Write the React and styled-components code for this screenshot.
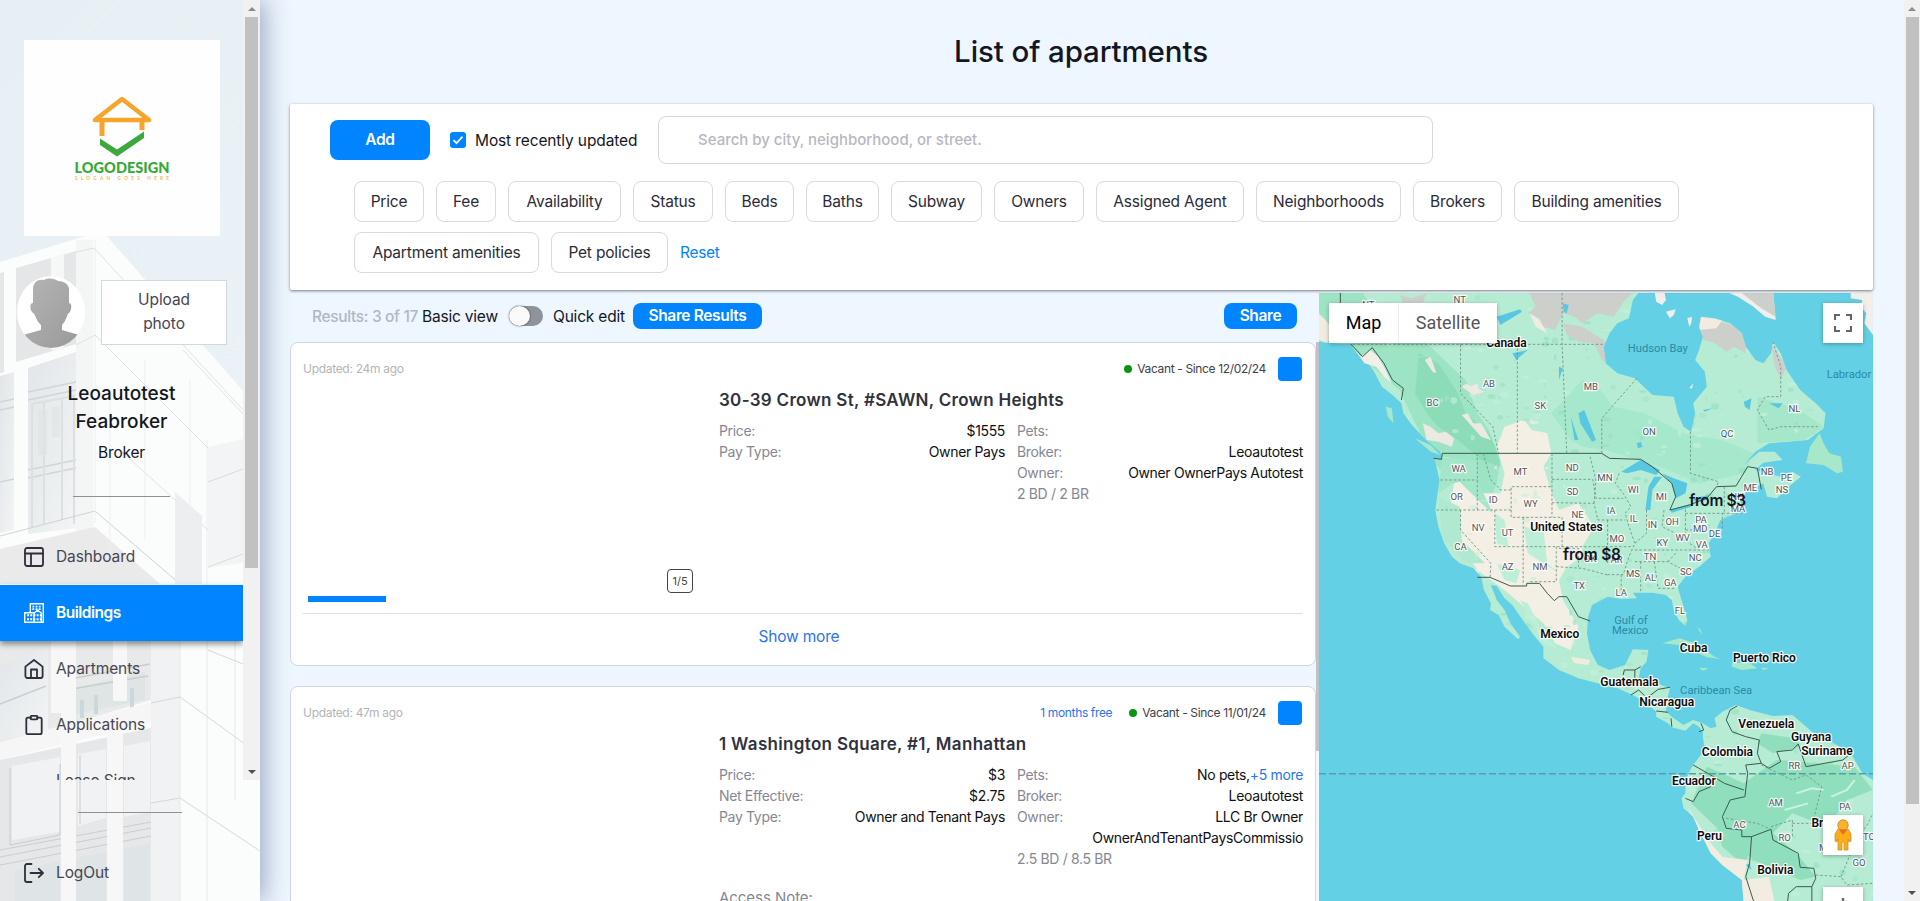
import React from "react";
import styled, { createGlobalStyle } from "styled-components";

const Global = createGlobalStyle`
  *, *::before, *::after { box-sizing: border-box; }
  html, body { margin: 0; height: 901px; overflow: hidden; }
  body { font-family: Inter, "Liberation Sans", sans-serif; font-size: 16px; color: #14171f; background: #eef6ff; }
  button { font: inherit; }
`;

const Page = styled.div`
  display: flex;
  width: 1920px;
  height: 901px;
  overflow: hidden;
  background: #eef6ff;
`;

/* ---------- sidebar ---------- */
const Sidebar = styled.aside`
  position: relative;
  z-index: 2;
  flex: none;
  width: 260px;
  height: 901px;
  background: #e9f0f4;
  box-shadow: 4px 0 24px rgba(50, 70, 110, 0.45);
`;
const Backdrop = styled.svg`
  position: absolute;
  inset: 0;
`;
const SidebarScroll = styled.div`
  position: relative;
  display: flex;
  height: 780px;
  overflow: hidden;
`;
const SidebarBody = styled.div`
  flex: none;
  width: 243px;
  display: flex;
  flex-direction: column;
  padding-top: 40px;
`;
const Brand = styled.div`
  width: 196px;
  height: 196px;
  margin-left: 24px;
  background: #fefefe;
`;
const Profile = styled.div`
  display: flex;
  align-items: center;
  gap: 16px;
  height: 72px;
  margin: 40px 0 0 17px;
`;
const UploadButton = styled.button`
  width: 126px;
  height: 65px;
  padding: 0 34px 1px;
  border: 1px solid #d3d8de;
  background: #fff;
  color: #464653;
  font-size: 15.5px;
  letter-spacing: -0.1px;
  line-height: 24px;
`;
const UserName = styled.div`
  margin: 32px auto 0;
  width: 130px;
  text-align: center;
  font-size: 19px;
  font-weight: 500;
  letter-spacing: 0.05px;
  line-height: 28px;
`;
const UserRole = styled.div`
  margin-top: 5px;
  text-align: center;
  font-size: 15.5px;
  letter-spacing: -0.2px;
  line-height: 24px;
`;
const Rule = styled.div`
  width: ${(p) => p.$w}px;
  height: 1px;
  margin: ${(p) => p.$margin};
  background: #8d9197;
  flex: none;
`;
const NavItem = styled.div`
  flex: none;
  display: flex;
  align-items: center;
  gap: 12px;
  height: 56px;
  padding-left: 24px;
  font-size: 15.5px;
  line-height: 22px;
  letter-spacing: ${(p) => (p.$active ? "-0.5px" : "-0.1px")};
  font-weight: ${(p) => (p.$active ? 600 : 400)};
  color: ${(p) => (p.$active ? "#fff" : "#464653")};
  background: ${(p) => (p.$active ? "#0084ff" : "transparent")};
  box-shadow: ${(p) => (p.$active ? "0 3px 6px rgba(0,0,0,.45)" : "none")};
  svg { color: ${(p) => (p.$active ? "#fff" : "#2f2f3c")}; }
`;
const NavText = styled.span`
  padding-bottom: 1px;
`;
const SidebarFooter = styled.div`
  position: relative;
  display: flex;
  flex-direction: column;
`;

/* ---------- scrollbars ---------- */
const Track = styled.div`
  flex: none;
  display: flex;
  flex-direction: column;
  align-items: center;
  justify-content: space-between;
  width: ${(p) => p.$w}px;
  height: ${(p) => p.$h}px;
  background: #f1f1f1;
`;
const Thumb = styled.div`
  width: 13px;
  height: ${(p) => p.$h}px;
  background: #c1c1c1;
`;
const TrackTop = styled.div`
  display: flex;
  flex-direction: column;
  align-items: center;
`;
const ArrowBox = styled.div`
  display: flex;
  align-items: center;
  justify-content: center;
  width: 17px;
  height: 17px;
`;
const Arrow = styled.i`
  border: 4px solid transparent;
  border-top-width: ${(p) => (p.$up ? 0 : 4)}px;
  border-bottom-width: ${(p) => (p.$up ? 4 : 0)}px;
  border-${(p) => (p.$up ? "bottom" : "top")}-color: ${(p) => (p.$up ? "#8b8b8b" : "#505050")};
`;
function Scrollbar({ width, height, thumb }) {
  return (
    <Track $w={width} $h={height}>
      <TrackTop>
        <ArrowBox><Arrow $up /></ArrowBox>
        <Thumb $h={thumb} />
      </TrackTop>
      <ArrowBox><Arrow /></ArrowBox>
    </Track>
  );
}

/* ---------- main ---------- */
const Main = styled.main`
  flex: none;
  width: 1644px;
  padding: 0 31px 0 29px;
  display: flex;
  flex-direction: column;
`;
const Title = styled.h1`
  margin: 0;
  height: 104px;
  line-height: 102px;
  text-align: center;
  font-size: 29.5px;
  font-weight: 500;
  letter-spacing: -0.1px;
`;
const FilterPanel = styled.section`
  flex: none;
  position: relative;
  z-index: 1;
  height: 186px;
  margin-left: 1px;
  padding-top: 12px;
  background: #fff;
  border-radius: 2px;
  box-shadow: 0 1px 3px rgba(0, 0, 0, 0.5);
  display: flex;
  flex-direction: column;
  gap: 17px;
`;
const SearchRow = styled.div`
  display: flex;
  align-items: center;
  height: 48px;
  padding-left: 40px;
`;
const BlueButton = styled.button`
  flex: none;
  width: ${(p) => p.$w}px;
  height: ${(p) => p.$h}px;
  padding: 0 0 1px;
  border: 0;
  border-radius: ${(p) => p.$r || 8}px;
  background: #0084ff;
  color: #fff;
  font-size: 15.5px;
  font-weight: 600;
  letter-spacing: -0.35px;
`;
const CheckLabel = styled.label`
  display: flex;
  align-items: center;
  gap: 9px;
  width: 208px;
  margin-left: 20px;
  white-space: nowrap;
  font-size: 15.5px;
  letter-spacing: -0.12px;
`;
const SearchField = styled.div`
  width: 775px;
  height: 48px;
  padding-left: 39px;
  border: 1px solid #d6d7dd;
  border-radius: 8px;
  line-height: 46px;
  color: #b7b7c4;
  font-size: 15px;
  font-weight: 500;
  letter-spacing: -0.01px;
`;
const Chips = styled.div`
  display: flex;
  flex-wrap: wrap;
  align-items: center;
  gap: 10px 12px;
  width: 1400px;
  margin-left: 64px;
`;
const Chip = styled.button`
  width: ${(p) => p.$w}px;
  height: 41px;
  padding: 0;
  border: 1px solid #d9d9e0;
  border-radius: 8px;
  background: #fff;
  color: #2b2b38;
  font-size: 15.5px;
  letter-spacing: -0.18px;
  white-space: nowrap;
`;
const ResetLink = styled.a`
  color: #0084ff;
  font-size: 15.5px;
  letter-spacing: -0.3px;
`;
const Split = styled.div`
  display: flex;
  height: 611px;
`;
const Listing = styled.div`
  flex: none;
  width: 1027px;
`;
const ResultBar = styled.div`
  display: flex;
  align-items: center;
  height: 52px;
  padding-left: 23px;
  white-space: nowrap;
  letter-spacing: -0.2px;
  font-size: 15.5px;
`;
const BarText = styled.span`
  flex: none;
  width: ${(p) => p.$w}px;
  color: ${(p) => (p.$muted ? "#b1b7c4" : "#14171f")};
  font-weight: ${(p) => (p.$muted ? 500 : 400)};
  letter-spacing: ${(p) => (p.$muted ? "-0.35px" : "inherit")};
`;
const Toggle = styled.span`
  flex: none;
  width: 34px;
  height: 20px;
  margin: 0 10px 0 0;
  border-radius: 10px;
  background: #8f949a;
  display: flex;
  align-items: center;
  &::before {
    content: "";
    width: 21px;
    height: 20px;
    border-radius: 50%;
    background: #fafafa;
    box-shadow: 0 0 2px rgba(0, 0, 0, 0.7);
  }
`;
const Spacer = styled.div`
  flex: 1;
`;
const Card = styled.article`
  width: 1026px;
  height: 324px;
  margin: 0 0 20px 1px;
  padding: 0 12px;
  border: 1px solid #cfd6e2;
  border-radius: 8px;
  background: #fff;
  display: flex;
  flex-direction: column;
`;
const CardTop = styled.div`
  display: flex;
  align-items: center;
  height: 24px;
  margin-top: 14px;
  font-size: 12px;
  line-height: 14px;
  letter-spacing: -0.36px;
  color: #3d3f4b;
`;
const Updated = styled.span`
  flex: 1;
  letter-spacing: -0.3px;
  color: #b4b4b8;
`;
const Perk = styled.span`
  margin-right: 17px;
  color: #2a74ee;
`;
const Dot = styled.i`
  width: 8px;
  height: 8px;
  margin-right: 5px;
  border-radius: 50%;
  background: #0a9416;
`;
const Square = styled.i`
  width: 24px;
  height: 24px;
  margin: 0 1px 0 12px;
  border-radius: 4px;
  background: #0084ff;
`;
const CardBody = styled.div`
  display: flex;
  height: 232px;
`;
const Photo = styled.div`
  flex: none;
  width: 416px;
  display: flex;
  flex-direction: column;
  justify-content: flex-end;
  padding: 0 0 11px 5px;
`;
const Counter = styled.div`
  align-self: flex-end;
  width: 26px;
  height: 24px;
  margin: 0 26px 3px 0;
  border: 1px solid #444;
  border-radius: 4px;
  text-align: center;
  font-size: 11px;
  line-height: 23px;
  color: #444;
`;
const Progress = styled.div`
  width: 78px;
  height: 6px;
  background: #0084ff;
`;
const Details = styled.div`
  flex: none;
  width: 584px;
`;
const Address = styled.h2`
  margin: 7px 0 8px;
  font-size: 17px;
  line-height: 24px;
  font-weight: 600;
  letter-spacing: ${(p) => p.$ls}px;
  color: #30323e;
`;
const Columns = styled.div`
  display: grid;
  grid-template-columns: 286px 286px;
  column-gap: 12px;
`;
const Pair = styled.div`
  display: flex;
  justify-content: space-between;
  align-items: flex-start;
  min-height: 21px;
  font-size: 14px;
  line-height: 21px;
  letter-spacing: -0.34px;
  white-space: nowrap;
`;
const Key = styled.span`
  color: #858795;
`;
const Value = styled.span`
  text-align: right;
  color: #101014;
  white-space: pre-line;
  em { font-style: normal; color: #2a74ee; }
`;
const AccessNote = styled.div`
  margin-top: 18px;
  font-size: 15px;
  line-height: 21px;
  letter-spacing: -0.05px;
  color: #858795;
`;
const ShowMore = styled.div`
  border-top: 1px solid #dfe1e6;
  padding-top: 11px;
  padding-right: 8px;
  text-align: center;
  color: #2a74ee;
  font-size: 15.5px;
  letter-spacing: -0.2px;
  line-height: 24px;
`;
const ListThumb = styled.div`
  flex: none;
  width: 3px;
  height: 409px;
  margin-top: 52px;
  background: #bfc1c8;
`;

/* ---------- map ---------- */
const MapArea = styled.div`
  position: relative;
  width: 554px;
  height: 608px;
  margin-top: 3px;
  overflow: hidden;
  background: #63d0e6;
`;
const MapSwitch = styled.div`
  position: absolute;
  left: 10px;
  top: 10px;
  display: flex;
  height: 40px;
  background: #fff;
  box-shadow: 0 1px 4px rgba(0, 0, 0, 0.3);
  font: 18px/40px Roboto, sans-serif;
  color: #565656;
`;
const MapMode = styled.span`
  width: ${(p) => p.$w}px;
  text-align: center;
  color: ${(p) => (p.$on ? "#000" : "#565656")};
  border-left: ${(p) => (p.$on ? 0 : "1px solid #ececec")};
`;
const MapControl = styled.div`
  position: absolute;
  left: 504px;
  top: ${(p) => p.$top}px;
  display: flex;
  align-items: center;
  justify-content: center;
  width: 40px;
  height: 40px;
  background: #fff;
  box-shadow: 0 1px 4px rgba(0, 0, 0, 0.3);
`;

const stroke = { fill: "none", stroke: "currentColor", strokeWidth: 1.8, strokeLinecap: "round", strokeLinejoin: "round" };
const icons = {
  dashboard: (
    <svg width="20" height="20" viewBox="0 0 20 20" {...stroke}>
      <rect x="1" y="1" width="18" height="18" rx="2" />
      <path d="M1 6.500h18M7 6.500V19" />
    </svg>
  ),
  buildings: (
    <svg width="20" height="20" viewBox="0 0 20 20" fill="none" stroke="currentColor" strokeWidth="1.400">
      <path d="M.7 19.300V9.700h5.600V.7h13v18.600zM6.300 9.700h5M10 19.300V10l3.700-2.900L17.300 10v9" />
      <path d="M8.400 3.600h9M8.400 6.100h9" strokeDasharray="1.800 1.400" strokeWidth="1.700" />
      <path d="M3 12.300h14M3 16.200h14" strokeDasharray="2 1.200" strokeWidth="2.100" />
    </svg>
  ),
  home: (
    <svg width="20" height="20" viewBox="0 0 20 20" {...stroke}>
      <path d="M1.400 7.600 10 1l8.600 6.600V17a2 2 0 0 1-2 2H3.400a2 2 0 0 1-2-2z" />
      <path d="M7 19v-8.500h6V19" />
    </svg>
  ),
  clipboard: (
    <svg width="20" height="20" viewBox="0 0 20 20" {...stroke}>
      <path d="M13 2.700h3a1.700 1.700 0 0 1 1.700 1.700v13A1.700 1.700 0 0 1 16 19.100H4a1.700 1.700 0 0 1-1.700-1.700v-13A1.700 1.700 0 0 1 4 2.700h3" />
      <rect x="6.500" y=".9" width="7" height="3.400" rx="1" />
    </svg>
  ),
  logout: (
    <svg width="20" height="20" viewBox="0 0 20 20" {...stroke}>
      <path d="M7.500 1H3a2 2 0 0 0-2 2v14a2 2 0 0 0 2 2h4.500M6.500 10H19M14.800 5.800 19 10l-4.200 4.200" />
    </svg>
  ),
};

function BuildingBackdrop() {
  return (
    <Backdrop width="260" height="901" viewBox="0 0 260 901">
      <defs>
        <linearGradient id="sky" x1="0" y1="0" x2="0.3" y2="1">
          <stop offset="0" stopColor="#e6eff3" />
          <stop offset="1" stopColor="#edf3f8" />
        </linearGradient>
        <linearGradient id="glass" x1="0" y1="0" x2="1" y2="1">
          <stop offset="0" stopColor="#e2e6e8" />
          <stop offset="1" stopColor="#f2f4f5" />
        </linearGradient>
      </defs>
      <rect width="260" height="901" fill="url(#sky)" />
      <path d="M0 262 92 234H105L260 410V901H0z" fill="#fbfcfc" />
      <path d="M16 268 76 251V344L16 362z" fill="#e5e6e8" />
      <path d="M0 273 4 272V372L0 373z" fill="#e4e6e7" />
      <path d="M51 258 64 254V350H51z" fill="#f6f7f7" />
      <path d="M76 240H93V530L76 534z" fill="#f4f5f5" />
      <path d="M28 368 76 352V528L28 534z" fill="url(#glass)" />
      <path d="M0 376 14 372V530L0 533z" fill="url(#glass)" />
      <path d="M28 392 76 382M28 400 76 390M0 402 14 399M0 410 14 407M28 470 76 460M28 478 76 468M0 482 14 479" stroke="#d0d5d8" strokeWidth="1.500" />
      <path d="M32 404 74 396V524M32 404V528M44 402V524M62 399V520" stroke="#dce0e1" strokeWidth="2" fill="none" />
      <path d="M38 410h9v45h-9zM52 407h8v30h-8z" fill="#dde2e3" opacity=".6" />
      <path d="M0 549 95 527 160 584H0z" fill="#eaeaeb" />
      <path d="M0 536 95 511 180 584" stroke="#cfd2d4" fill="none" />
      <path d="M95 523V240M110 400V560M145 360V540M190 380V590M207 440V590" stroke="#eceeef" fill="none" />
      <path d="M76 252 94 248 243 410M76 345 95 335 210 450 260 505M183 350 260 432M120 450 208 530" stroke="#dfe2e3" fill="none" />
      <path d="M175 492 202 516V584H175z" fill="#eceeef" />
      <path d="M208 447 260 435V560L208 568z" fill="#f3f4f5" />
      <path d="M208 482 243 469M208 567 243 554" stroke="#d9dcde" />
      <path d="M0 641H151V700L0 745z" fill="#e8e9e9" />
      <path d="M0 665 48 648V730L0 740z" fill="url(#glass)" />
      <path d="M65 690 145 672V700L65 716z" fill="#dfe4e5" />
      <path d="M0 704 46 686M65 680 150 664M66 690 148 676" stroke="#c9cdcf" strokeWidth="1.500" />
      <path d="M82 700V718M96 695V714M132 688V708" stroke="#cad7dc" strokeWidth="4" />
      <path d="M0 742 151 702V722L0 760z" fill="#f6f6f6" />
      <path d="M0 760 151 728V901H0z" fill="#e5e7e8" />
      <path d="M12 766 60 757V832L12 840zM78 754 106 749V818L78 826zM124 746 150 741V812L124 817z" fill="#f0f2f3" />
      <path d="M10 768V845L60 835V764M80 755V824M0 850 151 822M0 857 151 828M0 865 151 836" stroke="#c9ced1" fill="none" />
      <path d="M15 870 60 862V901H15zM76 858 106 852V901H76zM124 848 150 844V901H124z" fill="#dfe4e6" />
      <path d="M61 641H76V901H61zM107 722H123V901H107zM51 641h13v72H51zM113 641h14v60h-14z" fill="#f7f7f7" />
      <path d="M151 641H180V901H151z" fill="#f1f2f3" />
      <path d="M180 641V901M207 641V901M235 641V800" stroke="#e7e9ea" />
      <path d="M151 703 180 697 260 755M151 803 180 798 260 851M208 650 243 664" stroke="#d5d8da" fill="none" />
    </Backdrop>
  );
}

function BrandLogo() {
  return (
    <svg width="196" height="196" viewBox="0 0 196 196">
      <path d="M71 80 98 59 125 80z" fill="none" stroke="#f5a52b" strokeWidth="4.600" strokeLinejoin="round" />
      <path d="M78 80V96M118 80V90" stroke="#f5a52b" strokeWidth="5" />
      <path d="M76 98.500V105L93 116.500 120 98V91.500L93 109.500z" fill="#3da93c" />
      <text x="50.500" y="132.500" textLength="95" lengthAdjust="spacingAndGlyphs" fontFamily="Lato, sans-serif" fontWeight="900" fontSize="15" fill="#36a936">LOGODESIGN</text>
      <text x="51" y="139.500" textLength="94" fontFamily="Lato, sans-serif" fontWeight="700" fontSize="4.600" fill="#f0b65c">SLOGAN GOES HERE</text>
    </svg>
  );
}

function Avatar() {
  return (
    <svg width="68" height="72" viewBox="0 0 68 72">
      <defs>
        <clipPath id="face"><ellipse cx="34" cy="36" rx="34" ry="36" /></clipPath>
        <linearGradient id="person" x1="0" y1="0" x2="1" y2="1">
          <stop offset="0" stopColor="#b5b5b5" />
          <stop offset="1" stopColor="#999" />
        </linearGradient>
      </defs>
      <g clipPath="url(#face)">
        <rect width="68" height="72" fill="#fff" />
        <path d="M16 27V14C16 6 21 3 27 4 32 1 38 3 41 5 49 5 53 10 52 16V27C56 27 54 36 52 37 50 37 50 44 45 49V54L62 59V72H6V59L24 54V49C19 45 18 37 16 37 13 35 12 27 16 27z" fill="url(#person)" />
      </g>
    </svg>
  );
}

/* The land shapes are drawn on a 1447 x 1863 survey grid. */
const NORTH = "M23 30V185L60 190 105 192 130 230 150 250 165 275 185 320 212 345 235 370 240 400 262 435 290 470 335 515 340 540 320 535 325 560 333 600 328 640 322 690 330 740 345 790 365 830 385 850 420 865 440 890 447 930 465 970 463 990 485 1005 500 1040 535 1078 540 1070 515 1030 500 990 480 960 465 915 480 918 500 955 520 975 550 1025 575 1065 600 1100 600 1135 640 1170 690 1195 740 1210 790 1225 830 1245 860 1265 890 1295 890 1310 920 1330 930 1342 965 1352 985 1330 1000 1340 1010 1355 1010 1370 1015 1410 985 1455 975 1475 965 1510 965 1540 955 1555 960 1585 985 1610 1000 1650 1030 1720 1060 1755 1110 1800 1115 1870H1447V1500L1420 1480 1405 1450 1390 1420 1340 1385 1290 1355 1250 1315 1240 1305 1190 1308 1130 1290 1095 1275 1060 1295 1040 1315 1045 1340 1030 1345 1010 1330 985 1320 960 1335 935 1315 915 1295 920 1250 925 1225 880 1205 845 1195 850 1165 865 1145 870 1110 830 1108 810 1155 770 1170 740 1155 720 1110 712 1060 715 1010 725 975 765 950 800 957 840 955 830 938 880 938 915 945 930 960 935 990 948 1020 965 1037 970 1020 955 960 945 920 965 890 1000 860 1030 830 1025 790 1040 760 1055 720 1085 705 1110 690 1105 650 1130 630 1165 610 1175 650 1200 655 1230 620 1262 590 1240 575 1210 590 1175 580 1145 570 1165 548 1215 540 1195 515 1155 515 1110 560 1145 515 1180 490 1230 485 1280 480 1320 445 1325 400 1300 370 1260 330 1225 270 1210 220 1190 185 1185 220 1165 250 1145 240 1120 200 1110 160 1080 130 1040 115 1005 110 1000 140 1010 170 1000 210 990 240 1015 275 1020 320 985 370 990 400 980 455 960 440 945 400 935 350 880 345 835 295 790 280 760 250 755 200 770 160 790 130 820 115 830 60 850 30Z";

const dots = (() => {
  let s = 7;
  const r = () => ((s = (s * 16807) % 2147483647) / 2147483647);
  return Array.from({ length: 900 }, () => {
    const x = 25 + r() * 1420, y = 35 + r() * 1820;
    const w = 4 + r() * 20, h = 4 + r() * 16;
    const dry = x > 380 && x < 660 && y > 420 && y < 1000;
    return { x, y, w, h, f: dry ? (r() > 0.3 ? "#f5f0e6" : "#c5efd8") : ["#a2e6c9", "#c6f1dc", "#94dfbc"][Math.floor(r() * 3)] };
  });
})();

const px = (x) => x / 2.5705 - 9;
const py = (y) => y / 3 - 13;

const STATES = [
  ["NT", 385, 58], ["NT", 150, 73], ["AB", 460, 310], ["MB", 722, 319], ["BC", 315, 367], ["SK", 592, 376], ["ON", 872, 454], ["QC", 1072, 460], ["NL", 1245, 384],
  ["WA", 382, 565], ["MT", 541, 574], ["ND", 674, 562], ["MN", 758, 592], ["OR", 377, 649], ["ID", 471, 657], ["SD", 675, 634], ["WI", 831, 628], ["MI", 903, 649],
  ["WY", 567, 670], ["NE", 688, 703], ["IA", 774, 691], ["IL", 832, 715], ["IN", 880, 733], ["OH", 931, 724], ["NV", 432, 742], ["UT", 508, 757], ["MO", 789, 775],
  ["CA", 387, 799], ["KY", 906, 787], ["WV", 958, 772], ["VA", 1007, 793], ["TN", 874, 829], ["NC", 990, 832], ["AZ", 508, 859], ["NM", 591, 859], ["OK", 720, 835],
  ["AR", 788, 839], ["MS", 830, 880], ["AL", 875, 892], ["SC", 966, 874], ["GA", 926, 907], ["TX", 692, 916], ["LA", 800, 937], ["FL", 951, 991],
  ["PA", 1005, 718], ["MD", 1003, 745], ["DE", 1040, 760], ["NH", 1098, 650], ["MA", 1100, 685], ["ME", 1132, 622], ["NB", 1175, 574], ["PE", 1225, 592], ["NS", 1213, 628],
  ["RR", 1245, 1456], ["AP", 1382, 1456], ["AM", 1197, 1567], ["PA", 1375, 1579], ["AC", 1104, 1633], ["RO", 1220, 1672], ["TO", 1437, 1669], ["MT", 1326, 1702], ["GO", 1411, 1747],
];
const COUNTRIES = [
  ["Canada", 505, 190], ["United States", 659, 742], ["Mexico", 642, 1063], ["Cuba", 986, 1105], ["Puerto Rico", 1168, 1135], ["Guatemala", 821, 1207],
  ["Nicaragua", 917, 1267], ["Venezuela", 1173, 1333], ["Guyana", 1288, 1372], ["Suriname", 1329, 1414], ["Colombia", 1073, 1417], ["Ecuador", 987, 1504],
  ["Peru", 1027, 1669], ["Brazil", 1328, 1630], ["Bolivia", 1196, 1771],
];
const WATERS = [["Hudson Bay", 894, 205], ["Labrador Sea", 1413, 283], ["Gulf of", 825, 1021], ["Mexico", 823, 1051], ["Caribbean Sea", 1044, 1231]];

const MapLabel = styled.text`
  font-family: Roboto, sans-serif;
  font-size: ${(p) => p.$size}px;
  font-weight: ${(p) => p.$weight || 400};
  fill: ${(p) => p.$fill};
  text-anchor: middle;
  dominant-baseline: central;
  paint-order: stroke;
  stroke: ${(p) => p.$halo || "none"};
  stroke-width: 2.5px;
  stroke-linejoin: round;
`;
const PriceTag = styled.text`
  font-family: Inter, sans-serif;
  font-size: 15.5px;
  font-weight: 600;
  fill: #14171f;
  text-anchor: middle;
  dominant-baseline: central;
`;

function MapDrawing() {
  const line = { fill: "none", stroke: "#3c5a50", strokeWidth: 1, vectorEffect: "non-scaling-stroke" };
  const thin = { fill: "none", stroke: "#729488", strokeWidth: 0.9, strokeDasharray: "2.500 2", vectorEffect: "non-scaling-stroke" };
  return (
    <svg width="554" height="609" viewBox="0 0 554 609">
      <defs><clipPath id="land"><path d={NORTH} /></clipPath></defs>
      <g transform="translate(-9 -13) scale(.38903 .33333)">
        <path d={NORTH} fill="#b7ecd4" />
        <g clipPath="url(#land)">
          <path d="M23 30H130L190 130 300 190 400 300 430 400 460 450 490 540 480 610 440 720 360 600 320 550 230 330 100 200 23 190z" fill="#9ce4c3" />
          <path d="M280 220 330 250 380 340 400 400 460 460 475 500 490 560 440 540 380 480 330 440 300 400 270 340z" fill="#8bdcb7" />
          <path d="M700 300 740 320 780 380 860 400 960 460 1060 480 1140 520 1120 580 1000 610 900 560 760 510 700 500 670 480 620 400z" fill="#a6e8cb" />
          <path d="M1150 350 1260 390 1320 440 1270 480 1150 490z" fill="#a6e7ca" />
          <path d="M500 440 550 420 570 450 610 460 620 520 600 560 622 640 640 690 690 670 730 740 700 800 700 830 660 860 640 900 650 960 690 1040 670 1110 630 1090 600 1030 560 990 500 930 430 870 370 760 360 690 370 610 400 600 440 640 490 640 500 580 480 500z" fill="#f4efe5" />
          <path d="M340 530 430 540 430 600 470 700 450 680 380 600 330 640z" fill="#a3e6c9" />
          <path d="M330 650 385 680 390 780 450 850 400 850 340 770z" fill="#b0e9cf" />
          <path d="M475 700 500 720 510 800 480 790zM550 740 600 750 610 850 640 880 560 820zM480 850 540 870 530 910 500 900zM540 960 560 970 600 1060 640 1110 600 1090z" fill="#bdeed7" />
          {dots.map((d, i) => (
            <ellipse key={i} cx={d.x} cy={d.y} rx={d.w / 2} ry={d.h / 2} fill={d.f} opacity=".6" />
          ))}
          <path d="M390 320 400 312 415 318 430 310 435 328 450 335 420 345zM295 240 310 230 325 280 315 275zM290 430 310 440 330 460 350 455 370 475 365 500 330 485 300 480zM390 405 405 400 420 430 440 430 465 480 440 470z" fill="#ece9e0" />
          <path d="M560 30H840L810 60 780 110 740 100 700 130 680 110 650 100 630 150 600 140 590 115 560 100 580 80zM650 130 700 140 755 180 790 270 750 240 730 190 690 185 660 165zM1000 110 1120 145 1120 220 1090 200 1070 215 1040 190 1000 175zM1185 190 1225 260 1210 300 1195 260zM230 45 260 55 300 40 290 68 240 68z" fill="#cdcfcb" />
          <path d="M1005 110 1060 120 1045 145 1000 150zM23 100 40 120 60 150 45 190 23 180zM670 1130 720 1140 715 1155 680 1150zM565 100 590 120 610 160 580 140z" fill="#f1ebe0" />
          <path d="M1020 1460 1115 1510 1200 1440 1300 1450 1400 1460 1447 1530 1380 1560 1330 1640 1240 1600 1190 1660 1250 1720 1300 1790 1260 1800 1140 1740 1060 1660 980 1570z" fill="#8fdfbc" />
          <path d="M1160 1360 1250 1375 1260 1400 1190 1420 1150 1390zM1050 1660 1130 1700 1120 1760 1060 1700z" fill="#8fdfbc" />
          <path d="M1250 1540 1290 1525 1320 1530M1340 1550 1380 1530 1400 1500M1220 1590 1280 1570" fill="none" stroke="#c8f2de" strokeWidth="6" />
          <path d="M955 1540 970 1580 1030 1690 1060 1730 1125 1740 1115 1800 1180 1790 1195 1870H1110V1800L1040 1760z" fill="#f2ece2" />
          <path d="M870 620 885 590 905 590 880 630 875 690 862 690zM800 575 850 540 900 570 890 585 850 570 815 580zM905 580 935 595 970 610 965 640 940 655 930 610zM925 690 985 670 980 680 930 698zM985 655 1025 645 1020 660 990 665zM690 400 705 390 735 480 725 485 695 430zM670 410 690 480 680 480zM520 220 560 210 530 240zM480 110 540 88 545 95 490 135zM650 70 665 75 660 100 652 95zM640 260 650 265 640 300zM1115 365 1135 355 1130 390 1118 380zM1180 370 1215 370 1205 385zM1010 390 1035 385 1015 395zM840 490 850 485 855 500 843 505zM1120 1755 1130 1750 1135 1770z" fill="#58c7e2" />
        </g>
        <path d="M1310 460 1285 500 1275 550 1320 555 1355 580 1370 575 1365 530 1335 520 1320 490zM905 1090 950 1075 990 1090 1040 1130 1055 1137 1020 1132 950 1095zM1085 1148 1130 1150 1150 1165 1110 1170 1085 1160zM1000 1163 1025 1165 1010 1172zM1160 1163 1180 1164 1165 1170zM995 1040 1005 1050 1008 1065zM195 380 210 385 215 430 200 410zM270 475 310 495 335 525 310 515z" fill="#a8e8ca" />
        <path d="M885 30 910 30 915 60 905 75 890 65zM1060 30H1190L1197 120 1170 110 1140 80 1100 50zM915 95 940 88 935 105 925 115zM970 115 982 110 980 130 975 140zM1390 30H1447V165L1425 130 1430 100 1415 80 1420 60 1390 55zM975 325 985 310 982 325zM105 195 130 230 155 210 175 230 190 260 210 310 190 290 170 260 140 250z" fill="#f2efea" />
        <path d="M1100 30H1190L1197 110 1160 85z" fill="#cdcfcb" />
        <path {...line} d="M78 30V70M105 192 135 230 160 203 190 250 212 300 240 325 235 360M318 535 338 538 340 520H750L770 535 850 538 880 560 930 610 940 650 925 690 975 675 1020 655 1045 620 1095 618 1125 560 1150 565 1160 628M430 892 463 892 515 918H557V910H590L610 940 628 962 640 950H660L690 1010 720 1023M805 1185 808 1170H835L850 1160M835 1170V1205L860 1215M825 1245 845 1230 860 1247M870 1250 895 1228 925 1222M890 1293 920 1297M928 1315 930 1340M1000 1355 1012 1350 1005 1330M1098 1278 1080 1290 1070 1320 1085 1355 1120 1370 1155 1380 1150 1420 1160 1450 1120 1455 1125 1480 1118 1550 1080 1560 1060 1610 1070 1645 1110 1650 1110 1670 1135 1670 1185 1648 1190 1680 1255 1720 1260 1762 1295 1765 1300 1795 1290 1820 1250 1820 1230 1840 1228 1863M985 1455 1030 1485 1065 1510 1115 1530M965 1555 985 1565 1000 1535 1030 1520M1160 1450 1180 1465 1210 1445 1200 1415 1240 1410 1255 1392M1255 1392 1275 1460 1370 1440 1390 1420M1135 1670 1130 1750 1120 1790 1140 1863M1290 1820V1863" />
        <path {...thin} d="M110 193H755M387 193V340L470 440 485 520M533 205V520M648 39V193L660 520M840 295 750 415V520M978 455V580L1050 605 1045 620M1190 185 1210 260V350L1170 350 1150 390 1180 450 1210 440H1305M335 600H430M430 520V690M325 690H517V620H622M445 520 465 600 490 630 517 630M517 690V712H648M548 712V915M387 690V750L465 850 463 892M475 690V800H760M622 520V712M622 598H727L735 655H805M622 668 730 670 740 720H810M720 530 735 600 730 670M648 712V800M633 800V905H560M633 860 700 865 765 885M640 805H690V860M795 580 785 610 805 640 825 680 810 700 820 740 835 790 820 830 805 884H765M765 720V850M760 800H825M835 810H1030M800 884V930M850 845V935M885 845 895 925H940M835 845H920L960 870M920 845 940 820M865 690V760L835 790M910 690 905 740 940 760 1000 810M965 675V760M965 750H1035M965 700H1060V750M1065 620V700M1060 700 1110 700M1160 1455 1240 1500 1275 1485 1315 1520 1290 1640M1070 1615 1150 1630 1185 1648M1185 1640 1240 1620V1670M1240 1630H1320M1340 1660 1380 1700 1430 1640 1447 1600M1300 1785 1365 1790 1380 1815 1447 1810M1365 1790 1390 1720" />
        <path d="M23 1481H1447" stroke="#5d9ba5" strokeWidth="1.500" strokeDasharray="7 3" vectorEffect="non-scaling-stroke" />
      </g>
      {WATERS.map(([t, x, y]) => <MapLabel key={t + y} x={px(x)} y={py(y)} $size={11.2} $fill="#2a8ba3">{t}</MapLabel>)}
      {STATES.map(([t, x, y], i) => <MapLabel key={i} x={px(x)} y={py(y)} $size={9.5} $fill="#54545f" $halo="rgba(255,255,255,.85)">{t}</MapLabel>)}
      {COUNTRIES.map(([t, x, y]) => <MapLabel key={t} x={px(x)} y={py(y)} $size={12} $weight={600} $fill="#0c0c0c" $halo="rgba(255,255,255,.9)">{t}</MapLabel>)}
      <PriceTag x={px(1048)} y={py(661)} textLength="57">from $3</PriceTag>
      <PriceTag x={px(725)} y={py(823)} textLength="58">from $8</PriceTag>
    </svg>
  );
}

const NAV = [
  ["dashboard", "Dashboard"],
  ["buildings", "Buildings", true],
  ["home", "Apartments"],
  ["clipboard", "Applications"],
];
const CHIPS = [
  ["Price", 70], ["Fee", 60], ["Availability", 113], ["Status", 80], ["Beds", 69], ["Baths", 73], ["Subway", 91], ["Owners", 90],
  ["Assigned Agent", 148], ["Neighborhoods", 145], ["Brokers", 89], ["Building amenities", 165], ["Apartment amenities", 185], ["Pet policies", 117],
];
const HOMES = [
  {
    updated: "24m", since: "12/02/24", address: "30-39 Crown St, #SAWN, Crown Heights", ls: 0.3, count: "1/5",
    left: [["Price:", "$1555"], ["Pay Type:", "Owner Pays"]],
    right: [["Pets:", ""], ["Broker:", "Leoautotest"], ["Owner:", "Owner OwnerPays Autotest"], ["2 BD / 2 BR", ""]],
  },
  {
    updated: "47m", since: "11/01/24", perk: "1 months free", address: "1 Washington Square, #1, Manhattan", ls: 0.32,
    left: [["Price:", "$3"], ["Net Effective:", "$2.75"], ["Pay Type:", "Owner and Tenant Pays"]],
    right: [["Pets:", <>No pets,<em>+5 more</em></>], ["Broker:", "Leoautotest"], ["Owner:", "LLC Br Owner\nOwnerAndTenantPaysCommissio"], ["2.5 BD / 8.5 BR", ""]],
    note: "Access Note:",
  },
];

function Pairs({ rows }) {
  return (
    <div>
      {rows.map(([k, v]) => <Pair key={k}><Key>{k}</Key><Value>{v}</Value></Pair>)}
    </div>
  );
}

function HomeCard({ home }) {
  return (
    <Card>
      <CardTop>
        <Updated>Updated: {home.updated} ago</Updated>
        {home.perk && <Perk>{home.perk}</Perk>}
        <Dot />Vacant - Since {home.since}<Square />
      </CardTop>
      <CardBody>
        <Photo>
          {home.count && <><Counter>{home.count}</Counter><Progress /></>}
        </Photo>
        <Details>
          <Address $ls={home.ls}>{home.address}</Address>
          <Columns>
            <Pairs rows={home.left} />
            <Pairs rows={home.right} />
          </Columns>
          {home.note && <AccessNote>{home.note}</AccessNote>}
        </Details>
      </CardBody>
      {home.count && <ShowMore>Show more</ShowMore>}
    </Card>
  );
}

export default function App() {
  return (
    <Page>
      <Global />
      <Sidebar>
        <BuildingBackdrop />
        <SidebarScroll>
          <SidebarBody>
            <Brand><BrandLogo /></Brand>
            <Profile><Avatar /><UploadButton>Upload photo</UploadButton></Profile>
            <UserName>Leoautotest Feabroker</UserName>
            <UserRole>Broker</UserRole>
            <Rule $w={97} $margin="31px 0 32px 73px" />
            {NAV.map(([icon, label, active]) => (
              <NavItem key={label} $active={active}>{icons[icon]}<NavText>{label}</NavText></NavItem>
            ))}
            <NavItem><svg width="20" height="20" /><NavText>Lease Sign</NavText></NavItem>
          </SidebarBody>
          <Scrollbar width={17} height={780} thumb={551} />
        </SidebarScroll>
        <SidebarFooter>
          <Rule $w={104} $margin="32px 0 32px 78px" />
          <NavItem>{icons.logout}<NavText>LogOut</NavText></NavItem>
        </SidebarFooter>
      </Sidebar>
      <Main>
        <Title>List of apartments</Title>
        <FilterPanel>
          <SearchRow>
            <BlueButton $w={100} $h={40}>Add</BlueButton>
            <CheckLabel>
              <svg width="16" height="16" viewBox="0 0 16 16">
                <rect width="16" height="16" rx="3" fill="#0084ff" />
                <path d="m3.500 8.200 3 3 6-6.500" fill="none" stroke="#fff" strokeWidth="1.700" />
              </svg>
              Most recently updated
            </CheckLabel>
            <SearchField>Search by city, neighborhood, or street.</SearchField>
          </SearchRow>
          <Chips>
            {CHIPS.map(([t, w]) => <Chip key={t} $w={w}>{t}</Chip>)}
            <ResetLink>Reset</ResetLink>
          </Chips>
        </FilterPanel>
        <Split>
          <Listing>
            <ResultBar>
              <BarText $w={110} $muted>Results: 3 of 17</BarText>
              <BarText $w={87}>Basic view</BarText>
              <Toggle />
              <BarText $w={80}>Quick edit</BarText>
              <BlueButton $w={129} $h={26}>Share Results</BlueButton>
              <Spacer />
              <BlueButton $w={73} $h={26}>Share</BlueButton>
              <svg width="19" height="1" />
            </ResultBar>
            {HOMES.map((h) => <HomeCard key={h.address} home={h} />)}
          </Listing>
          <ListThumb />
          <MapArea>
            <MapDrawing />
            <MapSwitch><MapMode $w={69} $on>Map</MapMode><MapMode $w={99}>Satellite</MapMode></MapSwitch>
            <MapControl $top={10}>
              <svg width="18" height="18" viewBox="0 0 18 18"><path d="M1 6V1h5M12 1h5v5M17 12v5h-5M6 17H1v-5" fill="none" stroke="#666" strokeWidth="2.200" /></svg>
            </MapControl>
            <MapControl $top={522}>
              <svg width="18" height="32" viewBox="0 0 18 32">
                <path d="M4 10h10l3 5v7l-2 1-1-3v11h-4v-8H8v8H4V20l-1 3-2-1v-7z" fill="#fbae17" stroke="#c6862a" strokeWidth=".7" />
                <circle cx="9" cy="6" r="5.200" fill="#fbb324" stroke="#bb8230" strokeWidth=".8" />
                <path d="M5 10.500h8L9 16z" fill="#e0712a" />
              </svg>
            </MapControl>
            <MapControl $top={594}>
              <svg width="18" height="18" viewBox="0 0 18 18"><path d="M9 0v18M0 9h18" stroke="#666" strokeWidth="2.400" /></svg>
            </MapControl>
          </MapArea>
        </Split>
      </Main>
      <Scrollbar width={16} height={901} thumb={787} />
    </Page>
  );
}
